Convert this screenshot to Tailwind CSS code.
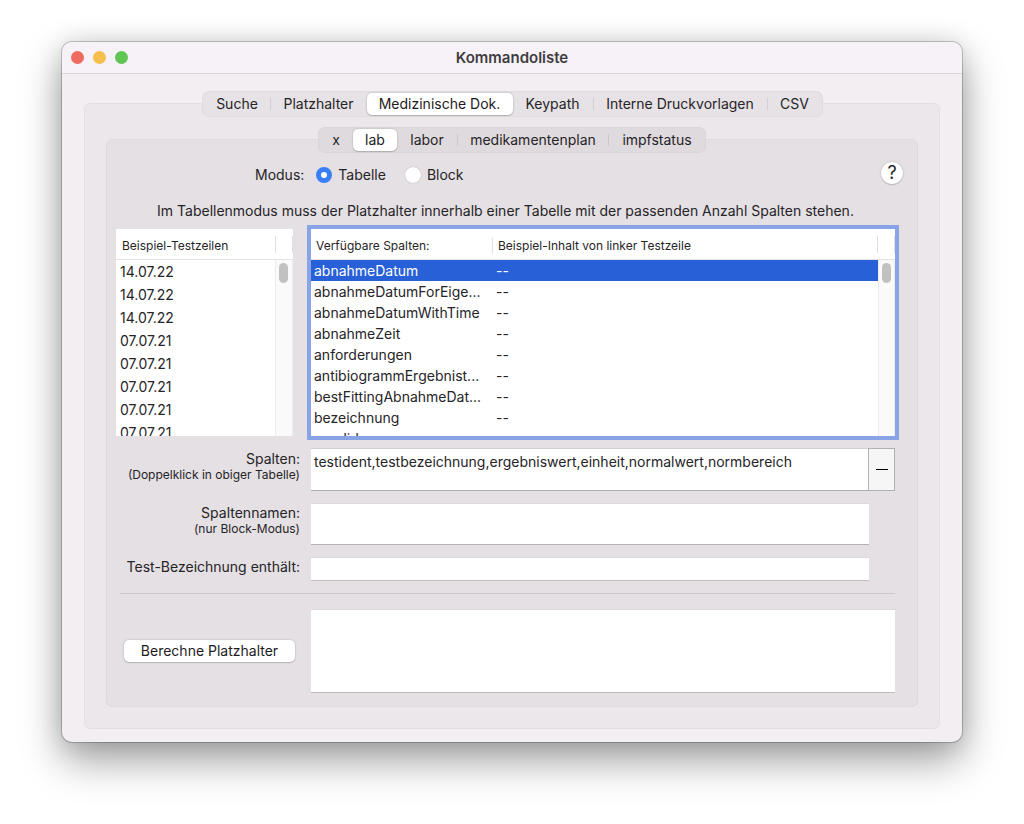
<!DOCTYPE html>
<html lang="de">
<head>
<meta charset="utf-8">
<meta name="viewport" content="width=device-width, initial-scale=1">
<title>Kommandoliste</title>
<script src="https://cdn.jsdelivr.net/npm/@tailwindcss/browser@4"></script>
</head>
<body class="bg-white px-[62px] pt-[42px] pb-[82px] font-['Inter',sans-serif] text-sm text-[#262427]">
<main class="rounded-[10px] bg-[#f3eef2] shadow-[0_0_0_1px_rgba(0,0,0,0.2),0_18px_40px_rgba(0,0,0,0.38),0_0_24px_rgba(0,0,0,0.12)]">
  <header class="grid h-8 grid-cols-[1fr_auto_1fr] items-center rounded-t-[10px] border-b border-[#d8d3d7] bg-[#f7f2f8] px-[9px]">
    <div class="flex gap-[9px]">
      <button aria-label="Schließen" class="size-[13px] rounded-full bg-[#ec6a5e]"></button>
      <button aria-label="Minimieren" class="size-[13px] rounded-full bg-[#f4bf4f]"></button>
      <button aria-label="Zoomen" class="size-[13px] rounded-full bg-[#61c554]"></button>
    </div>
    <h1 class="text-[15px] leading-5 font-semibold text-[#403d41]">Kommandoliste</h1>
  </header>

  <div class="px-[22px] pt-[18px] pb-[13px]">
    <nav class="relative z-10 -mb-[13px] flex justify-center" aria-label="Bereiche">
      <div class="flex h-6 items-center rounded-md bg-[#e6e2e5] ring-1 ring-[#dfdbde]">
        <button class="w-[67px] pl-[2px]">Suche</button>
        <span class="h-3 w-px bg-[#d2ced1]"></span>
        <button class="w-[96px]">Platzhalter</button>
        <button class="h-[22px] w-[146px] rounded-[5px] bg-white text-[#1d1b1e] shadow-[0_0_2px_rgba(0,0,0,0.25),0_1px_1px_rgba(0,0,0,0.15)]">Medizinische Dok.</button>
        <button class="w-[80px]">Keypath</button>
        <span class="h-3 w-px bg-[#d2ced1]"></span>
        <button class="w-[173px]">Interne Druckvorlagen</button>
        <span class="h-3 w-px bg-[#d2ced1]"></span>
        <button class="w-[54px]">CSV</button>
      </div>
    </nav>

    <div class="rounded-md border border-[#e3dfe2] bg-[#ebe7ea] px-[21px] pt-6 pb-[21px]">
      <nav class="relative z-10 -mb-[13px] flex justify-center" aria-label="Dokumentarten">
        <div class="flex h-6 items-center rounded-md bg-[#dfdade] ring-1 ring-[#d9d5d8]">
          <button class="w-[34px]">x</button>
          <button class="h-[22px] w-[44px] rounded-[5px] bg-white text-[#1d1b1e] shadow-[0_0_2px_rgba(0,0,0,0.25),0_1px_1px_rgba(0,0,0,0.15)]">lab</button>
          <button class="w-[60px]">labor</button>
          <span class="h-3 w-px bg-[#cbc7ca]"></span>
          <button class="w-[150px]">medikamentenplan</button>
          <span class="h-3 w-px bg-[#cbc7ca]"></span>
          <button class="w-[96px]">impfstatus</button>
        </div>
      </nav>

      <form class="rounded-md border border-[#dedadd] bg-[#e4e0e3] pt-[21px] pr-[22px] pb-[13px] pl-[9px]">
        <div class="-mr-[9px] flex h-6 items-center pl-[139px]">
          <fieldset class="flex flex-1 items-center pt-[3px]">
            <legend class="float-left mr-3">Modus:</legend>
            <label class="mr-[19px] flex items-center gap-[6px]">
              <input type="radio" name="modus" checked class="size-4 appearance-none rounded-full bg-white checked:border-[5px] checked:border-[#3a7ff6]">Tabelle
            </label>
            <label class="flex items-center gap-[6px]">
              <input type="radio" name="modus" class="size-4 appearance-none rounded-full bg-white shadow-[0_0_1px_rgba(0,0,0,0.35)] checked:border-[5px] checked:border-[#3a7ff6]">Block
            </label>
          </fieldset>
          <button type="button" aria-label="Hilfe" class="mr-px size-[22px] rounded-full bg-white text-lg leading-none shadow-[0_0_2px_rgba(0,0,0,0.25),0_1px_1px_rgba(0,0,0,0.12)]">?</button>
        </div>

        <p class="mt-4 mb-2 text-center leading-5">Im Tabellenmodus muss der Platzhalter innerhalb einer Tabelle mit der passenden Anzahl Spalten stehen.</p>

        <div class="flex gap-[18px]">
          <div class="relative h-[207px] w-[177px] overflow-hidden bg-white">
            <table class="w-full table-fixed">
              <thead class="text-xs">
                <tr class="h-[31px] shadow-[inset_0_-1px_0_#e4e2e3]">
                  <th class="pt-[2px] pl-[6px] text-left font-normal">Beispiel-Testzeilen</th>
                  <th class="w-[18px]"><div class="h-[17px] border-x border-[#e2e0e1]"></div></th>
                </tr>
              </thead>
              <tbody>
                <tr class="h-[23px]"><td class="pt-px pl-1">14.07.22</td></tr>
                <tr class="h-[23px]"><td class="pt-px pl-1">14.07.22</td></tr>
                <tr class="h-[23px]"><td class="pt-px pl-1">14.07.22</td></tr>
                <tr class="h-[23px]"><td class="pt-px pl-1">07.07.21</td></tr>
                <tr class="h-[23px]"><td class="pt-px pl-1">07.07.21</td></tr>
                <tr class="h-[23px]"><td class="pt-px pl-1">07.07.21</td></tr>
                <tr class="h-[23px]"><td class="pt-px pl-1">07.07.21</td></tr>
                <tr class="h-[23px]"><td class="pt-px pl-1">07.07.21</td></tr>
              </tbody>
            </table>
            <div class="absolute top-[31px] right-0 bottom-0 w-[18px] border-x border-[#ececec] bg-[#fafafa] pt-[3px] pl-[3px]">
              <div class="h-5 w-[9px] rounded-full bg-[#c1c1c1]"></div>
            </div>
          </div>

          <div class="relative h-[207px] flex-1 overflow-hidden bg-white outline-4 outline-[#88a4e6]">
            <table class="w-full table-fixed">
              <thead class="text-xs">
                <tr class="h-[31px] shadow-[inset_0_-1px_0_#e4e2e3]">
                  <th class="w-[182px] pt-[2px] pl-[5px] text-left font-normal"><div class="border-r border-[#e2e0e1]">Verfügbare Spalten:</div></th>
                  <th class="pt-[2px] pl-[5px] text-left font-normal">Beispiel-Inhalt von linker Testzeile</th>
                  <th class="w-[18px]"><div class="h-[17px] border-x border-[#e2e0e1]"></div></th>
                </tr>
              </thead>
              <tbody>
                <tr class="h-[21px] bg-[#2860d8] text-white"><td class="truncate pt-px pr-2 pl-[3px]">abnahmeDatum</td><td class="pt-px pl-[3px]">--</td><td></td></tr>
                <tr class="h-[21px]"><td class="truncate pt-px pr-2 pl-[3px]">abnahmeDatumForEige...</td><td class="pt-px pl-[3px]">--</td></tr>
                <tr class="h-[21px]"><td class="truncate pt-px pr-2 pl-[3px]">abnahmeDatumWithTime</td><td class="pt-px pl-[3px]">--</td></tr>
                <tr class="h-[21px]"><td class="truncate pt-px pr-2 pl-[3px]">abnahmeZeit</td><td class="pt-px pl-[3px]">--</td></tr>
                <tr class="h-[21px]"><td class="truncate pt-px pr-2 pl-[3px]">anforderungen</td><td class="pt-px pl-[3px]">--</td></tr>
                <tr class="h-[21px]"><td class="truncate pt-px pr-2 pl-[3px]">antibiogrammErgebnist...</td><td class="pt-px pl-[3px]">--</td></tr>
                <tr class="h-[21px]"><td class="truncate pt-px pr-2 pl-[3px]">bestFittingAbnahmeDat...</td><td class="pt-px pl-[3px]">--</td></tr>
                <tr class="h-[21px]"><td class="truncate pt-px pr-2 pl-[3px]">bezeichnung</td><td class="pt-px pl-[3px]">--</td></tr>
                <tr class="h-[21px]"><td class="truncate pt-px pr-2 pl-[3px]">candida</td><td class="pt-px pl-[3px]">--</td></tr>
              </tbody>
            </table>
            <div class="absolute top-[31px] right-0 bottom-0 w-[17px] border-x border-[#ececec] bg-[#fafafa] pt-[3px] pl-[3px]">
              <div class="h-5 w-[9px] rounded-full bg-[#c1c1c1]"></div>
            </div>
          </div>
        </div>

        <div class="mt-3 grid grid-cols-[184px_1fr] gap-x-[11px] gap-y-3">
          <label for="spalten" class="pt-[3px] text-right leading-[15px]">Spalten:<br><span class="text-xs leading-[15px]">(Doppelklick in obiger Tabelle)</span></label>
          <div class="flex h-[43px]">
            <textarea id="spalten" class="flex-1 resize-none border-t border-b border-t-[#d2ced1] border-b-[#b0adb0] bg-white px-[3px] pt-[3px] leading-5 outline-none">testident,testbezeichnung,ergebniswert,einheit,normalwert,normbereich</textarea>
            <button type="button" aria-label="Spalte entfernen" class="flex w-[27px] items-center justify-center border border-[#b3b0b3] bg-[#f6f6f6]"><span class="h-px w-3 bg-black"></span></button>
          </div>

          <label for="spaltennamen" class="pt-[2px] text-right leading-[15px]">Spaltennamen:<br><span class="text-xs leading-[15px]">(nur Block-Modus)</span></label>
          <textarea id="spaltennamen" class="mr-[26px] h-[42px] resize-none border-t border-b border-t-[#dcd8db] border-b-[#b5b2b5] bg-white outline-none"></textarea>

          <label for="test" class="text-right leading-5">Test-Bezeichnung enthält:</label>
          <input id="test" type="text" class="mr-[26px] h-6 border-t border-b border-t-[#dcd8db] border-b-[#c2bec1] bg-white outline-none">
        </div>

        <hr class="mt-3 mb-[15px] ml-1 border-[#cbc7ca]">

        <div class="grid grid-cols-[184px_1fr] items-center gap-x-[11px]">
          <button type="button" class="ml-2 h-[22px] w-[171px] rounded-[5px] bg-white text-[#1d1b1e] shadow-[0_0_2px_rgba(0,0,0,0.25),0_1px_1px_rgba(0,0,0,0.15)]">Berechne Platzhalter</button>
          <textarea aria-label="Platzhalter" class="h-[84px] resize-none border-t border-b border-t-[#dcd8db] border-b-[#bebabd] bg-white outline-none"></textarea>
        </div>
      </form>
    </div>
  </div>
</main>
</body>
</html>
